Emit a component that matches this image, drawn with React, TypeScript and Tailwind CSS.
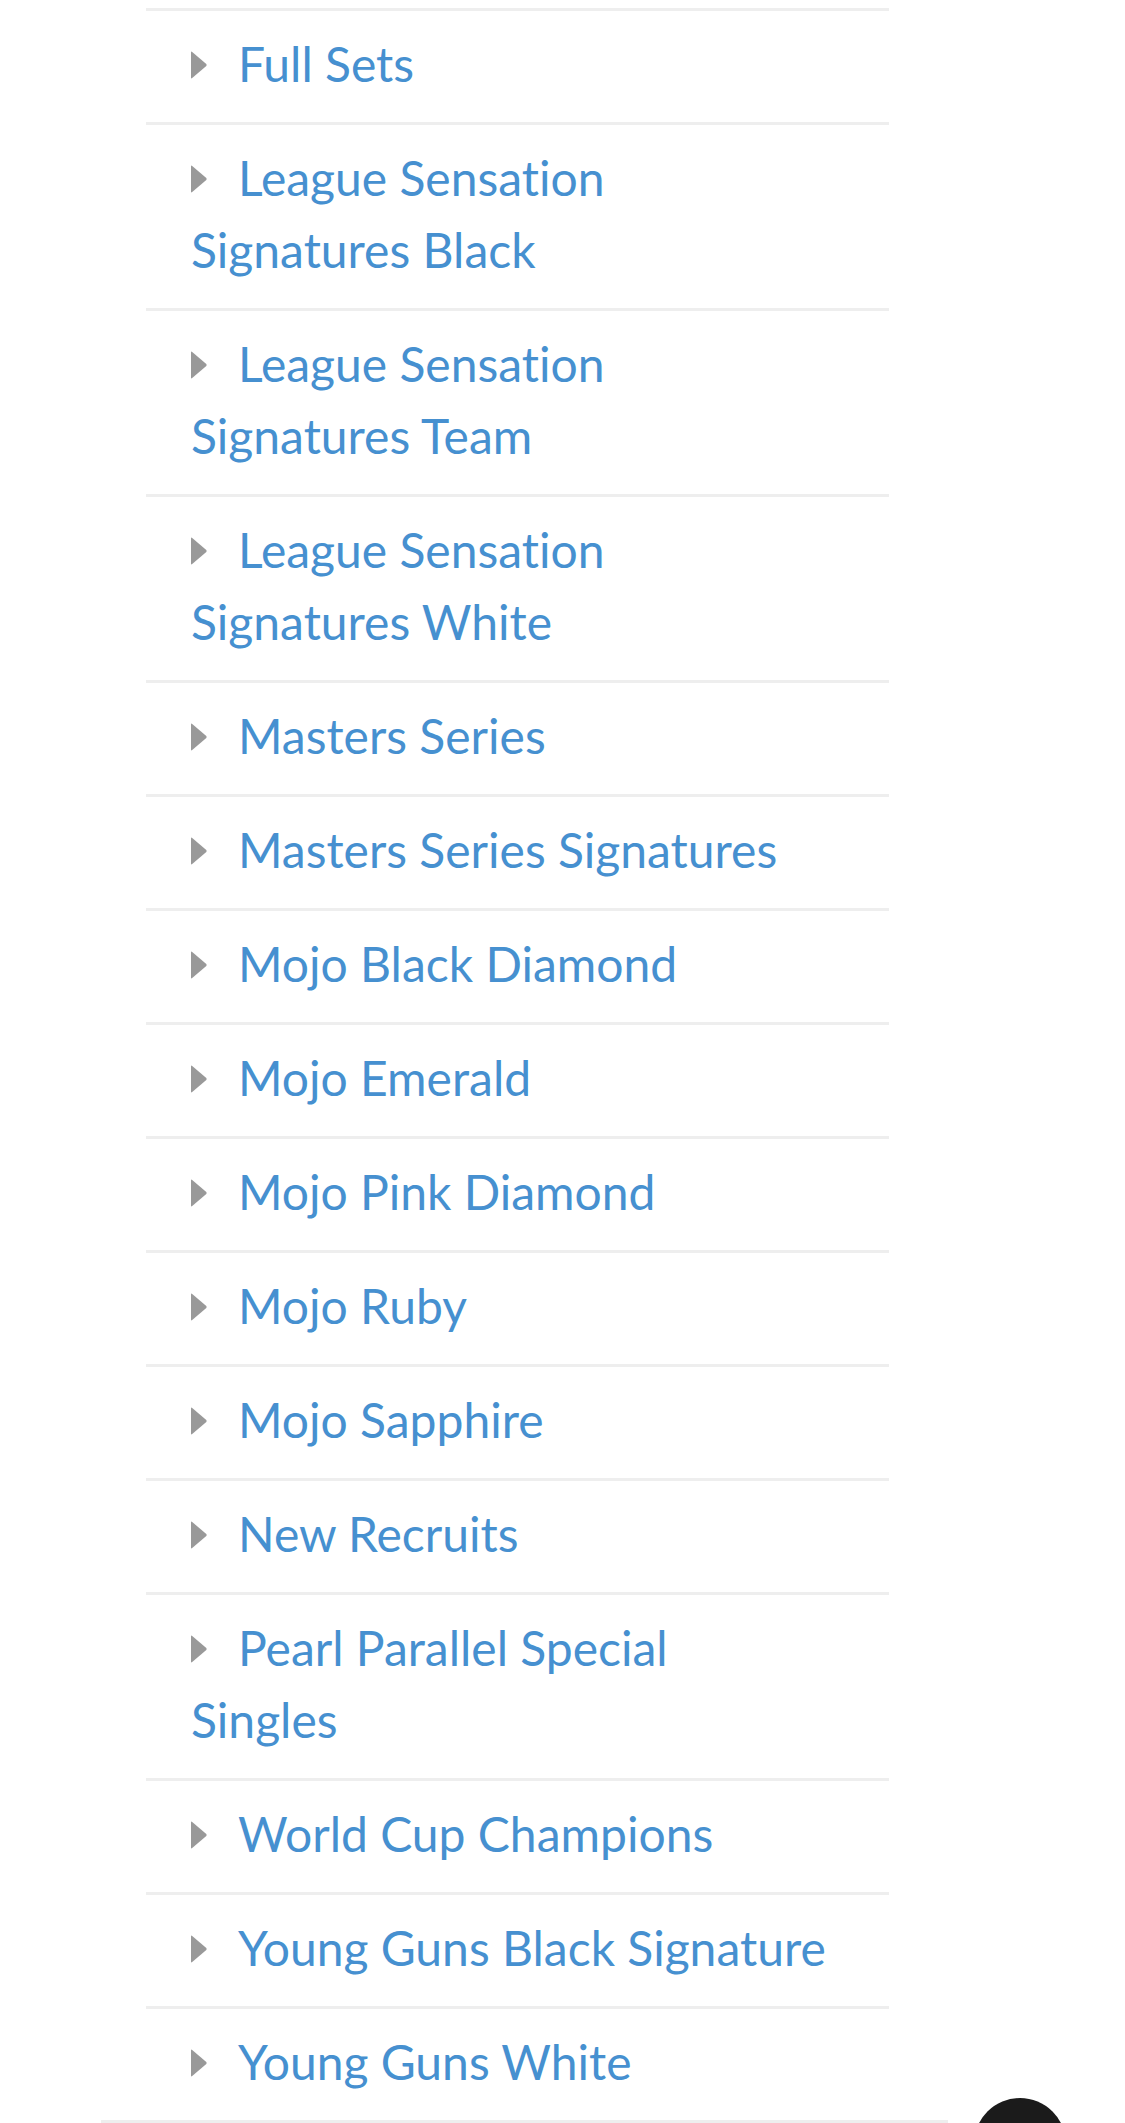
import React from "react";

// \n marks where the reference wraps a long name onto a second line
const categories = [
  "Full Sets",
  "League Sensation\nSignatures Black",
  "League Sensation\nSignatures Team",
  "League Sensation\nSignatures White",
  "Masters Series",
  "Masters Series Signatures",
  "Mojo Black Diamond",
  "Mojo Emerald",
  "Mojo Pink Diamond",
  "Mojo Ruby",
  "Mojo Sapphire",
  "New Recruits",
  "Pearl Parallel Special\nSingles",
  "World Cup Champions",
  "Young Guns Black Signature",
  "Young Guns White",
];

const Caret = () => (
  <svg
    viewBox="0 0 16 28"
    className="mr-[31px] inline-block h-[28px] w-[16px] align-[3px]"
    aria-hidden="true"
  >
    <path
      d="M0 1.5 Q0 0 1.2 1 L15.3 13 Q16 14 15.3 15 L1.2 27 Q0 28 0 26.5 Z"
      fill="#999999"
    />
  </svg>
);

const CategoryItem = ({ name }: { name: string }) => (
  <li className="border-t-[3px] border-[#eeeeee] pt-[17px] pr-[60px] pb-[22px] pl-[45px]">
    <a
      href="#"
      className="whitespace-pre-line text-[48px] leading-[72px] text-[#4690d0] [font-variant-ligatures:none]"
    >
      <Caret />
      {name}
    </a>
  </li>
);

const App = () => {
  return (
    <div className="relative h-[2123px] w-[1125px] overflow-hidden bg-white font-['Lato',sans-serif]">
      <div className="w-[847px] pt-[8px] ml-[101px]">
        <ul className="mx-[45px] w-[743px] list-none">
          {categories.map((c) => (
            <CategoryItem key={c} name={c} />
          ))}
        </ul>
        <div className="border-t-[3px] border-[#eeeeee]" />
      </div>
      {/* back to top button, mostly below the fold */}
      <div className="absolute left-[974px] top-[2098px] h-[92px] w-[92px] rounded-full bg-[#1b1b1b]" />
    </div>
  );
};

export default App;
